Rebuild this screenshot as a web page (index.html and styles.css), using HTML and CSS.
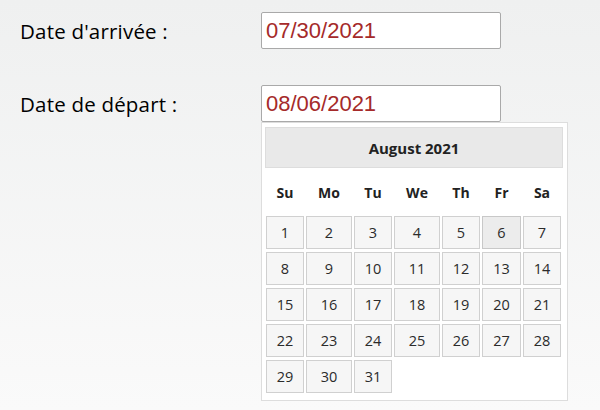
FILE: index.html
```html
<!DOCTYPE html>
<html lang="fr">
<head>
<meta charset="UTF-8">
<title>Dates</title>
<link rel="stylesheet" href="styles.css">
</head>
<body>
<div class="form">
    <div class="field">
        <label>Date d'arrivée :</label>
        <div class="input-wrap">
            <input type="text" value="07/30/2021">
        </div>
    </div>
    <div class="field">
        <label>Date de départ :</label>
        <div class="input-wrap">
            <input type="text" value="08/06/2021">
            <div class="datepicker">
                <div class="dp-header">August 2021</div>
                <div class="dp-names">
                    <span>Su</span><span>Mo</span><span>Tu</span><span>We</span><span>Th</span><span>Fr</span><span>Sa</span>
                </div>
                <div class="dp-days">
                    <span>1</span><span>2</span><span>3</span><span>4</span><span>5</span><span class="today">6</span><span>7</span>
                    <span>8</span><span>9</span><span>10</span><span>11</span><span>12</span><span>13</span><span>14</span>
                    <span>15</span><span>16</span><span>17</span><span>18</span><span>19</span><span>20</span><span>21</span>
                    <span>22</span><span>23</span><span>24</span><span>25</span><span>26</span><span>27</span><span>28</span>
                    <span>29</span><span>30</span><span>31</span>
                </div>
            </div>
        </div>
    </div>
</div>
</body>
</html>
```

FILE: styles.css
```css
* {
    margin: 0;
    padding: 0;
    box-sizing: border-box;
}
html, body {
    height: 100%;
}
body {
    background: linear-gradient(#eff0f0, #fafafa);
    font-family: "Open Sans", Lato, sans-serif;
    color: #111;
}
.form {
    padding: 12px 0 0 20px;
}
.field {
    display: flex;
    align-items: center;
    height: 37px;
}
.field + .field {
    margin-top: 36px;
}
.field label {
    width: 241px;
    font-size: 20.5px;
    letter-spacing: 0.2px;
    color: #000;
}
.input-wrap {
    position: relative;
}
.input-wrap input {
    width: 240px;
    height: 37px;
    border: 1px solid #a9a9a9;
    border-radius: 2px;
    background: #fff;
    padding: 0 4px;
    font-family: "Liberation Sans", Arial, sans-serif;
    font-size: 22px;
    color: #a52a2a;
    outline: none;
}
.datepicker {
    position: absolute;
    top: 37px;
    left: 0;
    width: 307px;
    background: #fff;
    border: 1px solid #dddddd;
    padding: 4px 4px 7px 3px;
}
.dp-header {
    height: 41px;
    background: #e9e9e9;
    border: 1px solid #dddddd;
    display: flex;
    align-items: center;
    justify-content: center;
    font-weight: bold;
    font-size: 15px;
    color: #222;
}
.dp-names, .dp-days {
    display: grid;
    grid-template-columns: 38px 46px 38px 46px 38px 39px 38px;
    column-gap: 2px;
    padding-left: 1px;
}
.dp-names {
    height: 48px;
    align-items: center;
    font-weight: bold;
    font-size: 14px;
    color: #222;
}
.dp-names span {
    text-align: center;
}
.dp-days {
    row-gap: 3px;
}
.dp-days span {
    height: 33px;
    display: flex;
    align-items: center;
    justify-content: center;
    background: #f6f6f6;
    border: 1px solid #d0d0d0;
    font-size: 14.5px;
    color: #2b2b2b;
}
.dp-days .today {
    background: #ececec;
    border-color: #c8c8c8;
}
```
